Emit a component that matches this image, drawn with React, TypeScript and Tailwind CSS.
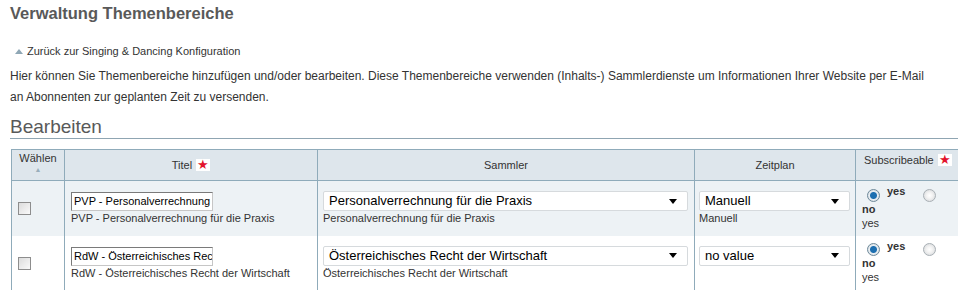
const rows = [
  {
    title: "PVP - Personalverrechnung für die Praxis",
    sammler: "Personalverrechnung für die Praxis",
    zeit: "Manuell",
    zeitNote: "Manuell",
    shaded: true,
  },
  {
    title: "RdW - Österreichisches Recht der Wirtschaft",
    sammler: "Österreichisches Recht der Wirtschaft",
    zeit: "no value",
    zeitNote: "",
    shaded: false,
  },
];

function Star() {
  return <span className="ml-1 inline-block bg-white px-[1px] text-[13px] leading-[12px] text-[#e2132c]">★</span>;
}

function Radio({ checked }: { checked?: boolean }) {
  return (
    <span
      className={
        "inline-block h-[13px] w-[13px] rounded-full border align-middle " +
        (checked
          ? "border-[#6f8a9a] bg-[radial-gradient(circle,#1d6fb0_0,#1d6fb0_3px,#e9eef2_4px,#c9d3da_100%)]"
          : "border-[#a9b0b5] bg-[radial-gradient(circle,#ffffff_0,#f2f2f2_40%,#d0d3d6_100%)]")
      }
    />
  );
}

function Select({ value, w }: { value: string; w: string }) {
  return (
    <div
      className={
        "flex h-[20px] items-center justify-between rounded-[2px] border border-[#d6dadd] bg-white pl-[5px] pr-[10px] " +
        w
      }
    >
      <span className="text-[13px] text-black">{value}</span>
      <svg width="8" height="5" viewBox="0 0 8 5">
        <path d="M0 0h8L4 5z" fill="#000" />
      </svg>
    </div>
  );
}

export default function App() {
  return (
    <div className="h-[290px] w-[958px] overflow-hidden bg-white font-['Liberation_Sans',Arial,sans-serif] text-[#333]">
      <div className="pl-[10px]">
        <h1 className="pt-[3px] text-[16.5px] font-bold leading-[20px] text-[#595959]">Verwaltung Themenbereiche</h1>
        <div className="mt-[21px] flex items-center pl-[5px] text-[11px] leading-[14px]">
          <svg width="8" height="5" viewBox="0 0 8 5" className="mr-[4px]">
            <path d="M0 5h8L4 0z" fill="#8fa7b5" />
          </svg>
          Zurück zur Singing &amp; Dancing Konfiguration
        </div>
        <p className="mt-[8px] w-[922px] text-[12px] leading-[21px]">
          Hier können Sie Themenbereiche hinzufügen und/oder bearbeiten. Diese Themenbereiche verwenden (Inhalts-)
          Sammlerdienste um Informationen Ihrer Website per E-Mail an Abonnenten zur geplanten Zeit zu versenden.
        </p>
        <h2 className="mt-[8px] border-b border-[#8fa5b2] text-[19px] leading-[22px] text-[#595959]">Bearbeiten</h2>
      </div>
      <table className="ml-[11px] mt-[10px] w-[975px] table-fixed border-collapse text-[11px]">
        <colgroup>
          <col className="w-[53px]" />
          <col className="w-[253px]" />
          <col className="w-[377px]" />
          <col className="w-[161px]" />
          <col />
        </colgroup>
        <thead>
          <tr className="h-[31px] bg-[#dee6ec]">
            <th className="border border-[#8fabba] px-1 pt-[2px] align-top font-normal leading-[13px]">
              Wählen
              <div className="text-[7px] leading-[9px] text-[#9aaebb]">▲</div>
            </th>
            <th className="border border-[#8fabba] font-normal">
              Titel
              <Star />
            </th>
            <th className="border border-[#8fabba] font-normal">Sammler</th>
            <th className="border border-[#8fabba] font-normal">Zeitplan</th>
            <th className="border border-[#8fabba] pl-[8px] pt-[2px] text-left align-top font-normal">
              Subscribeable
              <Star />
            </th>
          </tr>
        </thead>
        <tbody>
          {rows.map((r) => (
            <tr key={r.title} className={"h-[55px] " + (r.shaded ? "bg-[#edf2f5]" : "bg-white")}>
              <td className="border-x border-[#8fabba] pl-[6px] align-middle">
                <span className="block h-[13px] w-[13px] border border-[#8d8d8d] bg-[linear-gradient(135deg,#dcdcdc,#fafafa)]" />
              </td>
              <td className="border-x border-[#8fabba] pl-[6px] align-top pt-[11px]">
                <div className="h-[19px] w-[142px] overflow-hidden whitespace-nowrap border border-[#7a7a7a] border-b-[#c6c6c6] border-r-[#c6c6c6] bg-white pl-[2px] text-[11px] leading-[17px] text-black">
                  {r.title}
                </div>
                <div className="mt-[1px] text-[11px] leading-[13px]">{r.title}</div>
              </td>
              <td className="border-x border-[#8fabba] pl-[5px] align-top pt-[10px]">
                <Select value={r.sammler} w="w-[365px]" />
                <div className="mt-[1px] text-[11px] leading-[13px]">{r.sammler}</div>
              </td>
              <td className="border-x border-[#8fabba] pl-[4px] align-top pt-[10px]">
                <Select value={r.zeit} w="w-[151px]" />
                <div className="mt-[1px] text-[11px] leading-[13px]">{r.zeitNote}</div>
              </td>
              <td className="border-x border-[#8fabba] pl-[6px] align-top pt-[3px] text-[11px] leading-[14px]">
                <div className="flex items-start">
                  <span className="ml-[5px] mr-[7px] mt-[3px]">
                    <Radio checked />
                  </span>
                  <span className="font-bold">yes</span>
                  <span className="ml-[18px] mt-[3px]">
                    <Radio />
                  </span>
                </div>
                <div className="font-bold">no</div>
                <div>yes</div>
              </td>
            </tr>
          ))}
        </tbody>
      </table>
    </div>
  );
}
